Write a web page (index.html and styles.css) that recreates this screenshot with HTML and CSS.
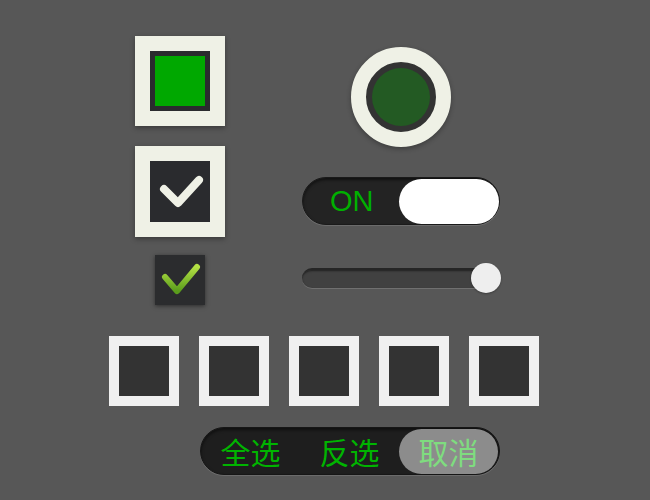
FILE: index.html
```html
<!DOCTYPE html>
<html>
<head>
<meta charset="utf-8">
<link rel="stylesheet" href="styles.css">
</head>
<body>
<div class="page">
  <div class="top">
    <div class="left">
      <div class="big-box"><div class="inner"><div class="fill"></div></div></div>
      <div class="big-box"><div class="inner">
        <svg width="60" height="61" viewBox="0 0 60 61"><polyline points="14,28 28,42 49,19" fill="none" stroke="#eff1e6" stroke-width="8" stroke-linecap="round" stroke-linejoin="round"/></svg>
      </div></div>
      <div class="small-box">
        <svg width="50" height="50" viewBox="0 0 50 50">
          <defs><linearGradient id="g" x1="0" y1="0" x2="0" y2="1"><stop offset="0" stop-color="#b3e044"/><stop offset="1" stop-color="#5a9c1c"/></linearGradient></defs>
          <polyline points="10,22 22,36 42,12" fill="none" stroke="url(#g)" stroke-width="6" stroke-linecap="round" stroke-linejoin="round"/>
        </svg>
      </div>
    </div>
    <div class="right">
      <div class="radio"><div class="radio-inner"></div></div>
      <div class="toggle"><span class="on">ON</span><div class="knob"></div></div>
      <div class="slider"><div class="track"></div><div class="thumb"></div></div>
    </div>
  </div>
  <div class="row">
    <div class="sq"></div><div class="sq"></div><div class="sq"></div><div class="sq"></div><div class="sq"></div>
  </div>
  <div class="seg">
    <span class="opt">全选</span>
    <span class="opt">反选</span>
    <span class="opt active">取消</span>
  </div>
</div>
</body>
</html>
```
FILE: styles.css
```css
html, body { margin: 0; padding: 0; }
body { background: #575757; width: 650px; height: 500px; overflow: hidden; font-family: "Liberation Sans", "Noto Sans CJK SC", sans-serif; }
.page { padding-top: 36px; }
.top { display: flex; }
.left { margin-left: 135px; width: 90px; display: flex; flex-direction: column; align-items: center; }
.big-box { width: 60px; height: 60px; border: 15px solid #eff1e6; background: #eff1e6; box-shadow: 0 2px 5px rgba(0,0,0,0.35); }
.big-box + .big-box { margin-top: 20px; height: 61px; }
.inner { width: 50px; height: 50px; border: 5px solid #2a2b2e; background: #2a2b2e; box-sizing: content-box; position: relative; }
.big-box + .big-box .inner { width: 60px; height: 61px; border: 0; }
.inner svg { display: block; }
.fill { width: 50px; height: 50px; background: #00a800; }
.small-box { margin-top: 18px; width: 50px; height: 50px; background: #2b2c2e; box-shadow: 0 1px 4px rgba(0,0,0,0.5); }
.small-box svg { display: block; }
.right { margin-left: 77px; width: 200px; display: flex; flex-direction: column; }
.radio { margin-top: 11px; margin-left: 49px; width: 70px; height: 70px; border: 15px solid #eff1e6; border-radius: 50%; background: #333; display: flex; align-items: center; justify-content: center; box-shadow: 0 2px 5px rgba(0,0,0,0.3); }
.radio-inner { width: 58px; height: 58px; border-radius: 50%; background: #235a23; }
.toggle { margin-top: 30px; width: 198px; height: 48px; box-sizing: border-box; border-radius: 24px; background: #232323; border: 1px solid #1a1a1a; box-shadow: 0 1px 0 rgba(255,255,255,0.12), inset 0 2px 3px rgba(0,0,0,0.5); display: flex; align-items: center; justify-content: space-between; padding: 0 0 0 27px; }
.on { color: #00b000; font-size: 29px; line-height: 1; }
.knob { width: 100px; height: 45px; border-radius: 23px; background: #ffffff; }
.slider { margin-top: 38px; height: 30px; display: flex; align-items: center; position: relative; }
.track { width: 186px; height: 20px; box-sizing: border-box; border-radius: 10px; background: #414141; border-top: 2px solid #262626; box-shadow: 0 1px 0 rgba(255,255,255,0.15), inset 0 1px 2px rgba(0,0,0,0.5); }
.thumb { width: 30px; height: 30px; border-radius: 50%; background: #eeeeee; margin-left: -17px; box-shadow: 0 1px 2px rgba(0,0,0,0.3); }
.row { display: flex; gap: 20px; margin-top: 31px; margin-left: 109px; }
.sq { width: 50px; height: 50px; border: 10px solid #f0f0f0; background: #333333; }
.seg { margin-top: 21px; margin-left: 200px; width: 300px; height: 48px; box-sizing: border-box; border-radius: 24px; background: #1e1e1e; border: 1px solid #161616; box-shadow: 0 1px 0 rgba(255,255,255,0.12), inset 0 2px 3px rgba(0,0,0,0.5); display: flex; align-items: center; padding: 0 1px 0 0; }
.opt { width: 100px; height: 45px; display: flex; align-items: center; justify-content: center; font-family: "Noto Sans CJK SC", sans-serif; font-size: 30px; color: #00b400; border-radius: 23px; }
.opt.active { background: #8c8c8c; color: #7fdc7f; }
```
